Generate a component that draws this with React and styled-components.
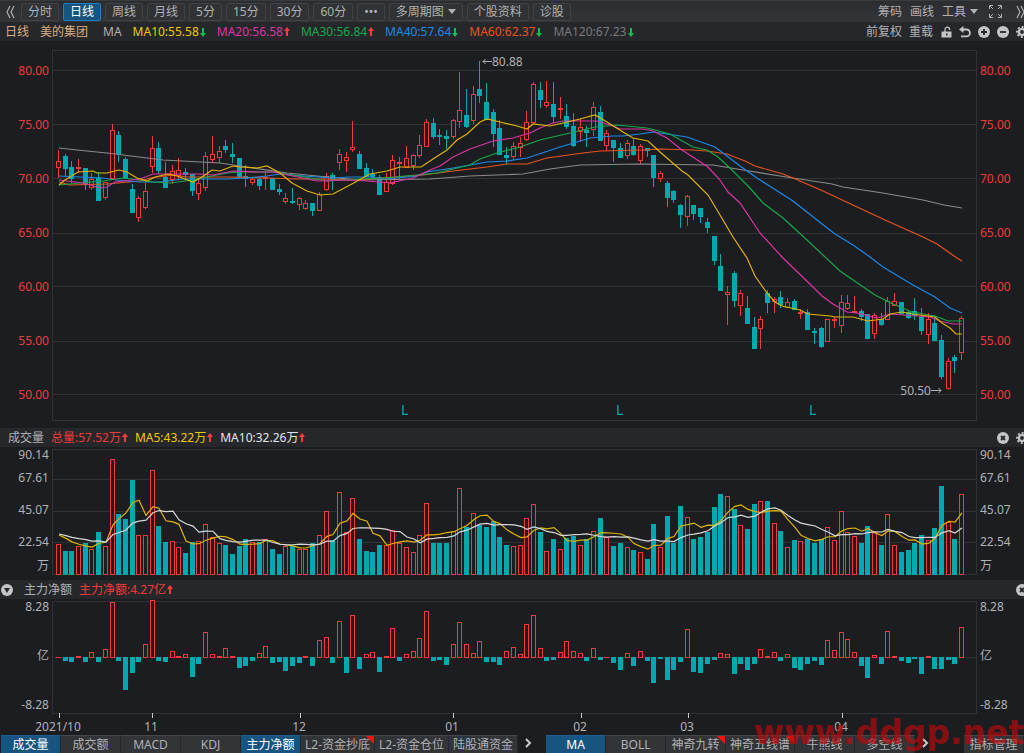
import { useState } from 'react';
import styled, { createGlobalStyle, css } from 'styled-components';

const RED = '#f23a3a';
const TEAL = '#00a8b0';
const GRID = '#303236';
const TEXT = '#b0b1b3';
const FONT = '"Noto Sans", "Noto Sans CJK SC", sans-serif';

const GlobalStyle = createGlobalStyle`
  * {
    box-sizing: border-box;
  }

  body {
    margin: 0;
    background: #1c1d21;
    color: ${TEXT};
    font-family: ${FONT};
    font-size: 12px;
    line-height: 16px;
  }

  button {
    font: inherit;
    color: inherit;
    margin: 0;
    padding: 0;
    border: 0;
    background: none;
    cursor: pointer;
    white-space: nowrap;
  }
`;

const Page = styled.main`
  position: relative;
  display: flex;
  flex-direction: column;
  min-height: 100vh;
  overflow: hidden;
`;

const Toolbar = styled.nav`
  display: flex;
  align-items: center;
  justify-content: space-between;
  height: 22px;
  padding-left: 3px;
  background: linear-gradient(#2c2d31, #333539);
  border-top: 1px solid #3a3b3f;
  overflow: hidden;
`;

const Group = styled.div`
  display: flex;
  align-items: center;
  flex-shrink: 0;
  gap: ${(props) => props.$gap || 4}px;
  margin-right: ${(props) => (props.$bleed ? -4 : 0)}px;
`;

const IconButton = styled.button`
  display: flex;
  align-items: center;
  justify-content: center;
  width: ${(props) => props.$width || 12}px;
  height: 16px;
`;

const PeriodButton = styled.button`
  display: flex;
  align-items: center;
  gap: 4px;
  height: 18px;
  padding: 0 6px;
  border: 1px solid #404246;
  border-radius: 2px;
  background: #303236;

  ${(props) => props.$active && css`
    color: #fff;
    background: #175580;
    border-color: #1e7fc0;
  `}
`;

const TextButton = styled.button`
  display: flex;
  align-items: center;
  gap: 4px;
`;

const InfoBar = styled.header`
  display: flex;
  align-items: center;
  justify-content: space-between;
  height: 19px;
  padding-left: ${(props) => props.$indent}px;
  background: #26272b;
  overflow: hidden;
`;

const Label = styled.span`
  padding-left: ${(props) => (props.$spaced ? 4 : 0)}px;
  color: ${(props) => props.$color || TEXT};
  white-space: nowrap;
`;

const Reading = styled.span`
  display: flex;
  align-items: center;
  gap: 1px;
  color: ${(props) => props.$color};
  white-space: nowrap;
`;

const Panel = styled.section`
  display: grid;
  grid-template-columns: 52px 1fr 47px;
`;

const Plot = styled.svg`
  display: block;
  width: 100%;
  height: ${(props) => props.$height}px;
  overflow: visible;
  font-family: ${FONT};
  font-size: 12px;
`;

const Axis = styled.div`
  display: flex;
  flex-direction: column;
  justify-content: space-between;
  padding: ${(props) => props.$pad};
  color: ${(props) => props.$color || TEXT};
  text-align: ${(props) => (props.$right ? 'left' : 'right')};
`;

const VolumeAxis = styled.div`
  display: grid;
  grid-template-rows: 15px 32px 32px 32px 16px;
  align-items: center;
  padding: ${(props) => (props.$right ? '0 0 0 3px' : '0 3px 0 0')};
  text-align: ${(props) => (props.$right ? 'left' : 'right')};
`;

const TabBar = styled.nav`
  display: flex;
  align-items: stretch;
  justify-content: space-between;
  height: 18px;
  padding-left: 1px;
`;

const TabGroup = styled.div`
  display: flex;

  & + & {
    margin-left: 8px;
    margin-right: auto;
  }
`;

const Tab = styled.button`
  position: relative;
  min-width: 60px;
  padding: 0 4px;
  border-top: 1px solid #45474b;
  border-right: 1px solid #26272b;
  background: #323438;

  ${(props) => props.$active && css`
    color: #fff;
    background: #175580;
    border-top-color: #1a5f8f;
  `}
`;

const Corner = styled.i`
  position: absolute;
  top: 0;
  right: 0;
  border-top: 8px solid #ff1010;
  border-left: 8px solid transparent;
`;

const Watermark = styled.div`
  position: absolute;
  right: 0;
  bottom: 0;
  color: rgba(190, 8, 12, 0.66);
  font: bold 33px/40px "DejaVu Sans", sans-serif;
  pointer-events: none;
`;

/* direction (1 up, 0 down), high, body top, body bottom, low */
const candles = [
  [1, 150, 161, 167, 177], [0, 154, 156, 168, 175], [0, 161, 167, 178, 182], [1, 159, 167, 168, 172],
  [0, 168, 168, 184, 189], [1, 173, 179, 187, 189], [0, 172, 178, 200, 200], [1, 182, 182, 197, 199],
  [1, 124, 130, 178, 178], [0, 131, 135, 153, 161], [0, 157, 159, 178, 178], [0, 184, 189, 212, 212],
  [1, 196, 198, 217, 221], [1, 183, 191, 207, 208], [1, 136, 148, 166, 172], [0, 142, 148, 170, 173],
  [0, 162, 177, 187, 187], [1, 165, 171, 179, 183], [1, 158, 170, 175, 179], [0, 168, 172, 174, 178],
  [0, 174, 174, 190, 195], [1, 178, 183, 193, 199], [1, 152, 156, 187, 190], [1, 136, 154, 159, 161],
  [1, 146, 151, 157, 162], [0, 140, 146, 149, 152], [0, 143, 154, 156, 162], [0, 158, 158, 176, 178],
  [0, 165, 176, 178, 186], [1, 177, 179, 182, 184], [0, 177, 179, 185, 189], [1, 172, 177, 178, 189],
  [0, 178, 178, 189, 189], [0, 184, 189, 191, 194], [1, 193, 198, 201, 203], [0, 188, 201, 202, 203],
  [1, 197, 198, 204, 209], [1, 200, 203, 208, 209], [0, 203, 203, 210, 215], [1, 192, 194, 210, 210],
  [1, 173, 176, 189, 190], [0, 173, 175, 179, 189], [1, 149, 154, 162, 169], [1, 152, 157, 160, 171],
  [1, 121, 147, 149, 151], [0, 151, 154, 168, 168], [0, 163, 168, 176, 176], [0, 169, 174, 176, 179],
  [0, 175, 177, 194, 194], [1, 173, 182, 191, 191], [1, 155, 160, 183, 184], [1, 157, 162, 163, 178],
  [1, 146, 158, 167, 167], [1, 154, 155, 165, 169], [1, 135, 145, 155, 157], [1, 119, 122, 146, 146],
  [0, 118, 123, 136, 138], [0, 129, 135, 136, 144], [0, 130, 136, 138, 148], [1, 119, 120, 136, 138],
  [1, 72, 110, 121, 127], [0, 89, 115, 126, 127], [1, 86, 94, 120, 123], [0, 61, 89, 95, 102],
  [0, 83, 102, 119, 119], [0, 109, 112, 133, 146], [0, 120, 128, 154, 154], [0, 147, 155, 157, 163],
  [1, 142, 146, 156, 159], [1, 137, 143, 147, 156], [1, 111, 122, 139, 140], [1, 82, 84, 122, 122],
  [0, 82, 90, 99, 107], [1, 81, 102, 105, 107], [0, 82, 104, 116, 122], [1, 97, 108, 109, 118],
  [0, 104, 116, 126, 128], [0, 113, 126, 145, 146], [1, 118, 127, 131, 141], [0, 126, 130, 132, 146],
  [1, 102, 107, 129, 135], [0, 106, 112, 140, 140], [1, 130, 133, 145, 150], [0, 140, 140, 147, 161],
  [0, 143, 148, 157, 157], [1, 140, 143, 155, 158], [0, 138, 146, 154, 155], [1, 144, 146, 160, 163],
  [0, 148, 148, 150, 156], [0, 155, 155, 177, 186], [1, 171, 173, 178, 181], [0, 181, 183, 197, 206],
  [0, 190, 191, 199, 202], [0, 204, 205, 214, 227], [1, 195, 196, 216, 225], [0, 205, 205, 213, 219],
  [0, 208, 208, 216, 222], [0, 218, 222, 227, 232], [0, 236, 236, 260, 264], [0, 254, 266, 290, 290],
  [1, 286, 292, 294, 324], [0, 271, 273, 300, 306], [1, 290, 293, 305, 315], [0, 296, 308, 323, 323],
  [0, 317, 327, 348, 348], [1, 316, 319, 328, 348], [0, 290, 293, 302, 312], [1, 297, 299, 301, 312],
  [0, 291, 297, 304, 307], [1, 298, 302, 307, 307], [0, 299, 301, 309, 309], [1, 309, 312, 313, 318],
  [0, 309, 312, 329, 329], [0, 328, 331, 332, 343], [0, 327, 328, 346, 347], [1, 319, 319, 341, 341],
  [1, 317, 319, 320, 327], [1, 295, 302, 325, 332], [1, 295, 303, 308, 309], [1, 296, 311, 312, 312],
  [0, 309, 311, 316, 320], [0, 314, 314, 338, 338], [1, 313, 315, 333, 338], [0, 313, 319, 324, 325],
  [1, 297, 301, 319, 319], [1, 293, 301, 305, 305], [0, 302, 302, 313, 313], [0, 311, 312, 317, 318],
  [0, 298, 311, 315, 319], [0, 308, 317, 330, 334], [1, 313, 319, 334, 343], [0, 317, 323, 340, 340],
  [0, 335, 340, 376, 378], [1, 358, 361, 388, 389], [0, 355, 357, 360, 372], [1, 316, 318, 352, 359],
];

const movingAverages = [
  {
    color: '#8a8a8a',
    points: '59,148 77,150 107,153 163,160 220,163 240,166 287,173 327,177 360,180 430,179 470,176 523,174 550,169 580,165 640,164 713,165 743,170 780,176 832,184 843,187 883,193 923,200 944,205 962,208',
  },
  {
    color: '#e8541c',
    points: '59,182 70,185 107,184 140,181 150,178 173,175 187,177 227,177 267,178 297,179 323,179 360,180 383,178 423,175 453,171 487,167 507,164 527,164 547,158 583,153 600,151 643,150 660,149 693,150 707,151 727,154 745,161 755,166 783,174 793,178 823,191 870,213 885,220 923,237 937,244 957,258 962,261',
  },
  {
    color: '#1b8ae6',
    points: '59,176 103,178 117,180 140,182 160,182 183,179 227,179 247,178 267,176 280,174 303,176 333,178 350,177 370,177 387,179 417,176 427,172 453,168 487,162 507,161 527,158 557,148 590,138 613,136 623,136 640,134 653,132 687,137 715,147 727,156 740,166 757,178 793,201 817,220 835,234 853,245 870,257 883,267 913,285 935,297 950,308 962,313',
  },
  {
    color: '#16a84a',
    points: '59,185 80,183 103,181 123,178 140,180 153,182 170,183 193,180 207,177 227,173 240,172 273,172 293,175 327,181 360,179 383,178 417,175 437,173 453,169 470,165 480,159 497,153 520,147 540,140 570,133 595,127 617,125 647,128 670,134 693,147 707,150 718,157 732,170 750,188 763,203 783,218 807,240 840,271 875,295 893,304 912,312 935,316 948,321 962,321',
  },
  {
    color: '#d935a4',
    points: '59,180 83,183 100,188 107,187 115,182 140,179 153,174 197,174 213,175 233,171 257,172 273,172 293,176 317,181 350,180 367,181 390,183 413,178 430,170 440,166 453,157 470,149 493,141 513,138 530,133 540,128 553,123 563,121 583,121 597,121 610,125 620,129 643,129 653,131 667,138 682,150 708,167 720,180 728,192 740,203 760,233 782,257 813,287 822,296 833,304 847,312 857,313 877,318 890,314 930,317 940,321 953,324 962,324',
  },
  {
    color: '#e0b400',
    points: '59,185 65,180 78,172 93,171 97,173 107,173 119,170 127,172 137,178 147,181 155,177 168,174 177,176 193,182 202,177 212,170 220,171 233,166 240,167 257,168 267,166 280,173 292,183 307,191 320,195 333,194 350,185 370,174 387,171 400,167 421,167 433,159 447,150 457,140 467,134 480,122 487,119 500,122 517,126 527,129 533,124 550,126 563,123 580,119 595,115 607,122 623,132 633,138 648,141 660,152 682,171 688,175 708,195 720,215 733,237 747,258 755,276 767,293 775,302 782,306 800,310 808,314 830,316 835,317 853,317 868,321 883,319 890,314 902,312 913,314 935,317 942,323 950,328 956,334 962,334',
  },
];

/* 383 is the top of the axis, 90.14万 */
const volumes = [
  94, 71, 71, 87, 95, 79, 129, 88, 347, 184, 169, 286, 120, 120, 315, 146, 98, 103, 83, 66, 100, 103, 154, 114, 95,
  91, 62, 86, 109, 100, 100, 108, 79, 62, 86, 86, 79, 77, 95, 120, 193, 106, 249, 128, 232, 109, 73, 69, 89, 91,
  136, 96, 85, 70, 120, 217, 95, 95, 95, 133, 260, 145, 185, 151, 143, 162, 115, 91, 88, 91, 172, 214, 128, 73, 109,
  79, 112, 118, 91, 108, 131, 172, 114, 86, 97, 83, 76, 68, 49, 154, 85, 178, 97, 206, 174, 109, 114, 130, 203, 244,
  238, 199, 151, 137, 212, 223, 221, 157, 131, 85, 106, 103, 108, 95, 108, 145, 106, 193, 130, 116, 97, 146, 128, 91,
  183, 91, 68, 74, 95, 120, 106, 140, 266, 159, 109, 244,
];

/* 165 is 8.28亿 */
const netFlows = [
  0, -10, -12, 3, -12, 16, -12, 24, 165, -10, -96, -45, -12, 38, 172, -10, -12, 18, 3, 9, -56, -18, 76, 9, 3, 26, 3,
  -30, -25, -10, 12, 33, -15, -12, -39, -25, -15, 3, -25, 50, 60, -15, 107, -45, 127, -34, 10, 16, -41, 4, 87, -8, 10,
  18, 58, 138, -10, -5, -22, 38, 105, 38, 13, 48, -13, -13, -22, 18, 30, 9, 100, 127, 27, -8, -5, 16, 48, 18, 12, -10,
  27, -7, 1, -16, -37, 13, -25, 18, -10, -74, -4, -65, -37, -13, 84, -41, -44, -19, -7, 12, 9, -47, -19, -37, -19, 24,
  4, 16, -10, 10, -30, -37, -19, -10, -22, 52, 21, 76, 55, 16, -25, -59, 6, -19, 78, 4, -10, -16, -4, -47, 4, -34,
  -34, -7, -19, 90,
];

const periods = ['分时', '日线', '周线', '月线', '5分', '15分', '30分', '60分', '•••', '多周期图', '个股资料', '诊股'];

const maReadings = [
  { text: 'MA10:55.58', color: '#f0c800' },
  { text: 'MA20:56.58', color: '#d935a4', up: true },
  { text: 'MA30:56.84', color: '#16a84a', up: true },
  { text: 'MA40:57.64', color: '#1b8ae6' },
  { text: 'MA60:62.37', color: '#e8541c' },
  { text: 'MA120:67.23', color: '#77797c' },
];

const prices = ['80.00', '75.00', '70.00', '65.00', '60.00', '55.00', '50.00'];
const volumeTicks = ['90.14', '67.61', '45.07', '22.54', '万'];
const flowTicks = ['8.28', '亿', '-8.28'];

const months = [
  { x: 59, text: '2021/10' },
  { x: 152, text: '11' },
  { x: 300, text: '12' },
  { x: 453, text: '01' },
  { x: 581, text: '02' },
  { x: 688, text: '03' },
  { x: 842, text: '04' },
];

const subTabs = [
  { text: '成交量', active: true },
  { text: '成交额' },
  { text: 'MACD' },
  { text: 'KDJ' },
  { text: '主力净额', active: true },
  { text: 'L2-资金抄底', hot: true },
  { text: 'L2-资金仓位' },
  { text: '陆股通资金' },
];

const mainTabs = [
  { text: 'MA', active: true },
  { text: 'BOLL' },
  { text: '神奇九转', hot: true },
  { text: '神奇五线谱', hot: true },
  { text: '牛熊线' },
  { text: '多空线' },
];

const barX = (i) => 58 + Math.round(i * 6.689);

// days before the first bar count as an average day
const averageLine = (days) => volumes.map((_, i) => {
  let sum = 0;
  for (let k = i - days + 1; k <= i; k += 1) sum += k < 0 ? 123 : volumes[k];
  return `${barX(i) + 1},${574 - sum / days / 3}`;
}).join(' ');

const Arrow = ({ up }) => (
  <svg width="6" height="10" viewBox="0 0 6 10" aria-hidden="true">
    <path
      d={up ? 'M3 0 L6 4 H4 V9 H2 V4 H0 Z' : 'M3 10 L0 6 H2 V1 H4 V6 H6 Z'}
      fill={up ? '#ff3a3a' : '#12c04c'}
    />
  </svg>
);

const Caret = () => (
  <svg width="8" height="5" viewBox="0 0 8 5" aria-hidden="true"><path d="M0 0 H8 L4 5 Z" fill={TEXT} /></svg>
);

const Chevrons = ({ right }) => (
  <svg width="9" height="14" viewBox="0 0 9 14" fill="none" stroke={TEXT} strokeWidth="1.2">
    <path d={right ? 'M1 1 L4 7 L1 13 M5 1 L8 7 L5 13' : 'M4 1 L1 7 L4 13 M8 1 L5 7 L8 13'} />
  </svg>
);

const More = () => (
  <svg width="7" height="10" viewBox="0 0 7 10" fill="none" stroke="#c8c9ca" strokeWidth="2">
    <path d="M1 1 L5 5 L1 9" />
  </svg>
);

const Expand = () => (
  <svg width="15" height="15" viewBox="0 0 15 15" fill="none" stroke={TEXT}>
    <path d="M1.5 5 V1.5 H5 M10 1.5 H13.5 V5 M13.5 10 V13.5 H10 M5 13.5 H1.5 V10 M2 2 L5 5 M13 2 L10 5 M13 13 L10 10 M2 13 L5 10" />
  </svg>
);

const Lock = () => (
  <svg width="11" height="12" viewBox="0 0 11 12">
    <path d="M4 6 V3.5 A2.3 2.3 0 0 1 8.6 3.5 V4" fill="none" stroke="#c4c5c6" strokeWidth="1.3" />
    <path d="M0.5 5.5 H10.5 V11.5 H0.5 Z" fill="#c4c5c6" />
    <path d="M5 7.5 H6.5 V9.5 H5 Z" fill="#26272b" />
  </svg>
);

const Undo = () => (
  <svg width="12" height="12" viewBox="0 0 12 12">
    <path d="M3 3.5 H7.5 A3.3 3.3 0 0 1 7.5 10.3 H2" fill="none" stroke="#c4c5c6" strokeWidth="1.8" />
    <path d="M0 3.5 L4.5 0 V7 Z" fill="#c4c5c6" />
  </svg>
);

const roundMarks = {
  plus: 'M6 3 V9 M3 6 H9',
  minus: 'M3 6 H9',
  close: 'M4 4 L8 8 M8 4 L4 8',
};

const Round = ({ mark }) => (
  <svg width="12" height="12" viewBox="0 0 12 12">
    <circle cx="6" cy="6" r="6" fill="#c4c5c6" />
    {mark === 'down'
      ? <path d="M3 4 H9 L6 9 Z" fill="#26272b" />
      : <path d={roundMarks[mark]} stroke="#26272b" strokeWidth="1.8" />}
  </svg>
);

const Gear = () => (
  <svg width="12" height="12" viewBox="0 0 12 12" fill="none" stroke="#c4c5c6">
    <circle cx="6" cy="6" r="3" strokeWidth="2.2" />
    <circle cx="6" cy="6" r="5" strokeWidth="1.9" strokeDasharray="2 1.93" strokeDashoffset="1" />
  </svg>
);

const Frame = ({ top, bottom, lines }) => (
  <g stroke={GRID} fill="none" shapeRendering="crispEdges">
    <rect x="52.5" y={top + 0.5} width="924" height={bottom - top} />
    {lines.map((y) => <line key={y} x1="53" x2="976" y1={y + 0.5} y2={y + 0.5} />)}
  </g>
);

const Bar = ({ x, top, bottom, hollow }) => {
  const height = bottom - top;
  if (hollow && height > 2) {
    return <rect x={x - 1.5} y={top + 0.5} width="4" height={height - 1} fill="#1c1d21" stroke={RED} />;
  }
  return <rect x={x - 2} y={top} width="5" height={Math.max(height, 1)} fill={hollow ? RED : TEAL} />;
};

const PriceChart = () => (
  <Plot $height={387} viewBox="52 41 925 387" preserveAspectRatio="none" role="img" aria-label="日线">
    <Frame top={50} bottom={420} lines={[70, 124, 178, 233, 286, 341, 394]} />
    <g shapeRendering="crispEdges">
      {candles.map(([up, high, top, bottom, low], i) => (
        <g key={i}>
          <rect x={barX(i)} y={high} width="1" height={low - high + 1} fill={up ? RED : TEAL} />
          <Bar x={barX(i)} top={top} bottom={bottom + 1} hollow={up === 1} />
        </g>
      ))}
    </g>
    {movingAverages.map((line) => (
      <polyline key={line.color} points={line.points} fill="none" stroke={line.color} strokeWidth="1.2" />
    ))}
    <g fill="none" stroke={TEXT}>
      <path d="M483 61.5 H492 M485.5 59 L483 61.5 L485.5 64" />
      <path d="M931 390.5 H941 M938.5 388 L941 390.5 L938.5 393" />
    </g>
    <text x="492" y="66" fill={TEXT}>80.88</text>
    <text x="931" y="395" fill={TEXT} textAnchor="end">50.50</text>
    {[401, 616, 809].map((x) => <text key={x} x={x} y="415" fill={TEAL} fontSize="14">L</text>)}
  </Plot>
);

const VolumeChart = () => (
  <Plot $height={133} viewBox="52 447 925 133" preserveAspectRatio="none" role="img" aria-label="成交量">
    <Frame top={449} bottom={574} lines={[479, 511, 542]} />
    <g shapeRendering="crispEdges">
      {volumes.map((value, i) => (
        <Bar key={i} x={barX(i)} top={575 - Math.round(value / 3)} bottom={575} hollow={candles[i][0] === 1} />
      ))}
    </g>
    <polyline points={averageLine(5)} fill="none" stroke="#e0b400" strokeWidth="1.2" />
    <polyline points={averageLine(10)} fill="none" stroke="#d8d8d8" strokeWidth="1.2" />
  </Plot>
);

const FlowChart = () => (
  <Plot $height={136} viewBox="52 599 925 136" preserveAspectRatio="none" role="img" aria-label="主力净额">
    <Frame top={601} bottom={713} lines={[657]} />
    <g shapeRendering="crispEdges">
      {netFlows.map((value, i) => {
        const size = Math.round(Math.abs(value) / 3);
        return value < 0
          ? <Bar key={i} x={barX(i)} top={657} bottom={658 + size} />
          : <Bar key={i} x={barX(i)} top={657 - size} bottom={658} hollow />;
      })}
    </g>
    {months.map((month) => (
      <g key={month.text}>
        <rect x={month.x} y="713" width="1" height="5" fill="#c8c9ca" />
        <text x={month.x - 1} y="731" textAnchor="middle" fill={TEXT}>{month.text}</text>
      </g>
    ))}
  </Plot>
);

const TabItem = ({ tab }) => (
  <Tab type="button" $active={tab.active}>
    {tab.text}
    {tab.hot && <Corner />}
  </Tab>
);

const App = () => {
  const [period, setPeriod] = useState('日线');

  return (
    <>
      <GlobalStyle />
      <Page>
        <Toolbar>
          <Group>
            <IconButton type="button" $width={14} aria-label="收起"><Chevrons /></IconButton>
            {periods.map((name) => (
              <PeriodButton
                key={name}
                type="button"
                $active={name === period}
                onClick={() => setPeriod(name)}
              >
                {name}
                {name === '多周期图' && <Caret />}
              </PeriodButton>
            ))}
          </Group>
          <Group $gap={8} $bleed>
            <TextButton type="button">筹码</TextButton>
            <TextButton type="button">画线</TextButton>
            <TextButton type="button">工具<Caret /></TextButton>
            <IconButton type="button" $width={18} aria-label="全屏"><Expand /></IconButton>
            <IconButton type="button" $width={16} aria-label="展开"><Chevrons right /></IconButton>
          </Group>
        </Toolbar>

        <InfoBar $indent={5}>
          <Group $gap={11}>
            <Label $color="#d9ad80">日线</Label>
            <Label $color="#d9ad80">美的集团</Label>
            <Label $spaced>MA</Label>
            {maReadings.map((item) => (
              <Reading key={item.text} $color={item.color}>{item.text}<Arrow up={item.up} /></Reading>
            ))}
          </Group>
          <Group $gap={7} $bleed>
            <TextButton type="button">前复权</TextButton>
            <TextButton type="button">重载</TextButton>
            <IconButton type="button" aria-label="锁定"><Lock /></IconButton>
            <IconButton type="button" aria-label="撤销"><Undo /></IconButton>
            <IconButton type="button" aria-label="放大"><Round mark="plus" /></IconButton>
            <IconButton type="button" aria-label="缩小"><Round mark="minus" /></IconButton>
            <IconButton type="button" aria-label="设置"><Gear /></IconButton>
          </Group>
        </InfoBar>

        <Panel>
          <Axis $color={RED} $pad="22px 3px 25px 0">
            {prices.map((price) => <span key={price}>{price}</span>)}
          </Axis>
          <PriceChart />
          <Axis $right $color={RED} $pad="22px 0 25px 3px">
            {prices.map((price) => <span key={price}>{price}</span>)}
          </Axis>
        </Panel>

        <InfoBar $indent={8}>
          <Group $gap={7}>
            <Label>成交量</Label>
            <Reading $color={RED}>总量:57.52万<Arrow up /></Reading>
            <Reading $color="#f0c800">MA5:43.22万<Arrow up /></Reading>
            <Reading $color="#e4e4e4">MA10:32.26万<Arrow up /></Reading>
          </Group>
          <Group $gap={7} $bleed>
            <IconButton type="button" aria-label="关闭成交量"><Round mark="close" /></IconButton>
            <IconButton type="button" aria-label="设置成交量"><Gear /></IconButton>
          </Group>
        </InfoBar>

        <Panel>
          <VolumeAxis>
            {volumeTicks.map((tick) => <span key={tick}>{tick}</span>)}
          </VolumeAxis>
          <VolumeChart />
          <VolumeAxis $right>
            {volumeTicks.map((tick) => <span key={tick}>{tick}</span>)}
          </VolumeAxis>
        </Panel>

        <InfoBar $indent={1}>
          <Group $gap={7}>
            <IconButton type="button" aria-label="选择指标"><Round mark="down" /></IconButton>
            <Label $spaced>主力净额</Label>
            <Reading $color={RED}>主力净额:4.27亿<Arrow up /></Reading>
          </Group>
          <Group $bleed>
            <IconButton type="button" aria-label="关闭主力净额"><Round mark="close" /></IconButton>
          </Group>
        </InfoBar>

        <Panel>
          <Axis $pad="0 3px 22px 0">
            {flowTicks.map((tick) => <span key={tick}>{tick}</span>)}
          </Axis>
          <FlowChart />
          <Axis $right $pad="0 0 22px 3px">
            {flowTicks.map((tick) => <span key={tick}>{tick}</span>)}
          </Axis>
        </Panel>

        <TabBar>
          <TabGroup>
            {subTabs.map((tab) => <TabItem key={tab.text} tab={tab} />)}
            <IconButton type="button" $width={20} aria-label="更多副图指标"><More /></IconButton>
          </TabGroup>
          <TabGroup>
            {mainTabs.map((tab) => <TabItem key={tab.text} tab={tab} />)}
            <IconButton type="button" $width={20} aria-label="更多主图指标"><More /></IconButton>
          </TabGroup>
          <Tab type="button">指标管理</Tab>
        </TabBar>
        <Watermark>www.ddgp.net</Watermark>
      </Page>
    </>
  );
};

export default App;
